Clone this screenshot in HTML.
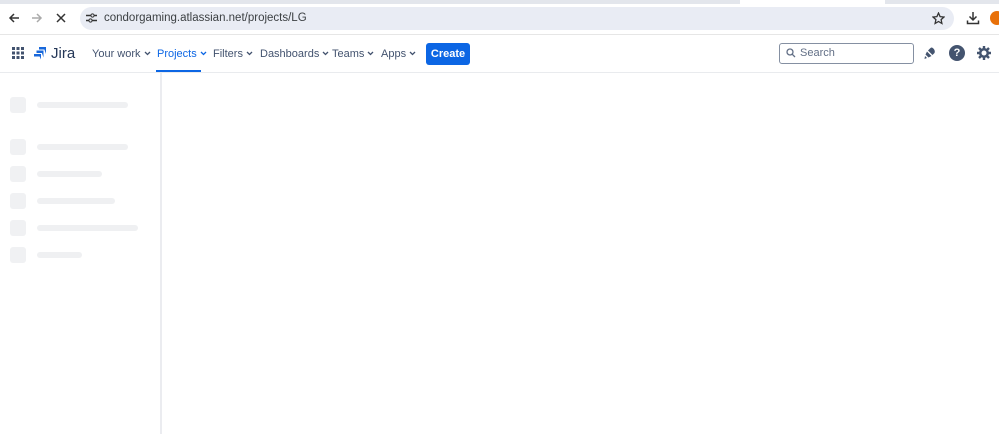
<!DOCTYPE html>
<html><head><style>
body{margin:0;width:999px;height:434px;overflow:hidden;background:#fff;font-family:"Liberation Sans",sans-serif;position:relative}
.a{position:absolute}
.nav{font-size:11px;color:#42526e;top:48px;white-space:nowrap}
.nav svg{margin-left:3px;vertical-align:1px}
.sq{position:absolute;left:10px;width:16px;height:16px;background:#f0f1f3;border-radius:3px}
.bar{position:absolute;left:37px;height:6px;background:#eff0f2;border-radius:3px}
</style></head><body>
<div class="a" style="left:0;top:0;width:999px;height:4px;background:#e3e6ec"></div>
<div class="a" style="left:740px;top:0;width:145px;height:4px;background:#fff"></div>
<svg class="a" style="left:8px;top:12px" width="12" height="12"><path d="M11 6H2M6 2L2 6l4 4" stroke="#333" stroke-width="1.5" fill="none"/></svg>
<svg class="a" style="left:31px;top:12px" width="12" height="12"><path d="M1 6h9M6 2l4 4-4 4" stroke="#aaa" stroke-width="1.5" fill="none"/></svg>
<svg class="a" style="left:56px;top:13px" width="10" height="10"><path d="M1 1l8 8M9 1L1 9" stroke="#333" stroke-width="1.5"/></svg>
<div class="a" style="left:80px;top:7px;width:874px;height:23px;background:#e9ecf4;border-radius:12px"></div>
<svg class="a" style="left:86px;top:13px" width="11" height="10"><g stroke="#333" stroke-width="1.4"><path d="M0 2.5h5M8 2.5h3M0 7.5h3M6 7.5h5"/></g><circle cx="6.5" cy="2.5" r="1.6" fill="none" stroke="#333"/><circle cx="4.5" cy="7.5" r="1.6" fill="none" stroke="#333"/></svg>
<div class="a" style="left:104px;top:12px;font-size:11.5px;color:#3c4043">condorgaming.atlassian.net/projects/LG</div>
<svg class="a" style="left:932px;top:12px" width="13" height="13"><path d="M6.5 1l1.6 3.6 3.9.4-2.9 2.6.8 3.9-3.4-2-3.4 2 .8-3.9L1 5l3.9-.4z" fill="none" stroke="#333" stroke-width="1.3"/></svg>
<svg class="a" style="left:966px;top:11px" width="14" height="14"><path d="M7 1v8M3.5 5.5L7 9l3.5-3.5M1.5 9.5v3h11v-3" fill="none" stroke="#333" stroke-width="1.5"/></svg>
<div class="a" style="left:990px;top:11px;width:14px;height:14px;border-radius:7px;background:#e8710a"></div>
<div class="a" style="left:0;top:34px;width:999px;height:1px;background:#e6e6e6"></div>
<svg class="a" style="left:12px;top:47px" width="12" height="12"><g fill="#42526e"><rect x="0" y="0" width="3" height="3"/><rect x="4.5" y="0" width="3" height="3"/><rect x="9" y="0" width="3" height="3"/><rect x="0" y="4.5" width="3" height="3"/><rect x="4.5" y="4.5" width="3" height="3"/><rect x="9" y="4.5" width="3" height="3"/><rect x="0" y="9" width="3" height="3"/><rect x="4.5" y="9" width="3" height="3"/><rect x="9" y="9" width="3" height="3"/></g></svg>
<svg class="a" style="left:33px;top:46px" width="14" height="14"><g fill="#1868db"><path d="M6 1h7v2.5H6z"/><path d="M10.5 1H13v7z"/><path d="M3.5 4.5h7V7h-7z"/><path d="M8 4.5h2.5v7z"/><path d="M1 8h7v2.5H1z"/><path d="M5.5 8H8v5.5z"/></g></svg>
<div class="a" style="left:51px;top:45px;font-size:15px;color:#253858">Jira</div>
<div class="a nav" style="left:92px">Your work<svg width="7" height="5"><path d="M1 1l2.5 2.5L6 1" stroke="#42526e" stroke-width="1.3" fill="none"/></svg></div>
<div class="a nav" style="left:157px;color:#0c66e4">Projects<svg width="7" height="5"><path d="M1 1l2.5 2.5L6 1" stroke="#0c66e4" stroke-width="1.3" fill="none"/></svg></div>
<div class="a" style="left:156px;top:70px;width:45px;height:3px;background:#0c66e4"></div>
<div class="a nav" style="left:213px">Filters<svg width="7" height="5"><path d="M1 1l2.5 2.5L6 1" stroke="#42526e" stroke-width="1.3" fill="none"/></svg></div>
<div class="a nav" style="left:260px">Dashboards<svg width="7" height="5"><path d="M1 1l2.5 2.5L6 1" stroke="#42526e" stroke-width="1.3" fill="none"/></svg></div>
<div class="a nav" style="left:332px">Teams<svg width="7" height="5"><path d="M1 1l2.5 2.5L6 1" stroke="#42526e" stroke-width="1.3" fill="none"/></svg></div>
<div class="a nav" style="left:381px">Apps<svg width="7" height="5"><path d="M1 1l2.5 2.5L6 1" stroke="#42526e" stroke-width="1.3" fill="none"/></svg></div>
<div class="a" style="left:426px;top:43px;width:44px;height:22px;background:#0c66e4;border-radius:3px;color:#fff;font-size:11px;font-weight:bold;text-align:center;line-height:22px">Create</div>
<div class="a" style="left:779px;top:43px;width:133px;height:19px;border:1px solid #8590a2;border-radius:3px"></div>
<svg class="a" style="left:786px;top:48px" width="10" height="10"><circle cx="4" cy="4" r="3" fill="none" stroke="#626f86" stroke-width="1.3"/><path d="M6.3 6.3L9 9" stroke="#626f86" stroke-width="1.3"/></svg>
<div class="a" style="left:800px;top:47px;font-size:11px;color:#626f86">Search</div>
<svg class="a" style="left:923px;top:46px" width="14" height="14"><path d="M9 1.5c2 1 3.5 3.5 2.5 5.5L9.5 9 5 4.5 7 2.5c.7-.7 1.3-1.2 2-1zM4 5.5l4.5 4.5-3 1.5L2.5 8.5zM2 10l2 2-2.5 1z" fill="#44546f"/></svg>
<div class="a" style="left:949px;top:45px;width:16px;height:16px;border-radius:8px;background:#44546f;color:#fff;font-size:11px;font-weight:bold;text-align:center;line-height:16px">?</div>
<svg class="a" style="left:976px;top:45px" width="16" height="16"><g stroke="#44546f" stroke-width="2.4"><path d="M8 1v14M1 8h14M3 3l10 10M13 3L3 13"/></g><circle cx="8" cy="8" r="5" fill="#44546f"/><circle cx="8" cy="8" r="2.5" fill="#fff"/></svg>
<div class="a" style="left:0;top:72px;width:999px;height:1px;background:#e9ebee"></div>
<div class="a" style="left:160px;top:73px;width:2px;height:361px;background:#ebecf0"></div>
<div class="sq" style="top:97px"></div><div class="bar" style="top:102px;width:91px"></div>
<div class="sq" style="top:139px"></div><div class="bar" style="top:144px;width:91px"></div>
<div class="sq" style="top:166px"></div><div class="bar" style="top:171px;width:65px"></div>
<div class="sq" style="top:193px"></div><div class="bar" style="top:198px;width:78px"></div>
<div class="sq" style="top:220px"></div><div class="bar" style="top:225px;width:101px"></div>
<div class="sq" style="top:247px"></div><div class="bar" style="top:252px;width:45px"></div>
</body></html>
